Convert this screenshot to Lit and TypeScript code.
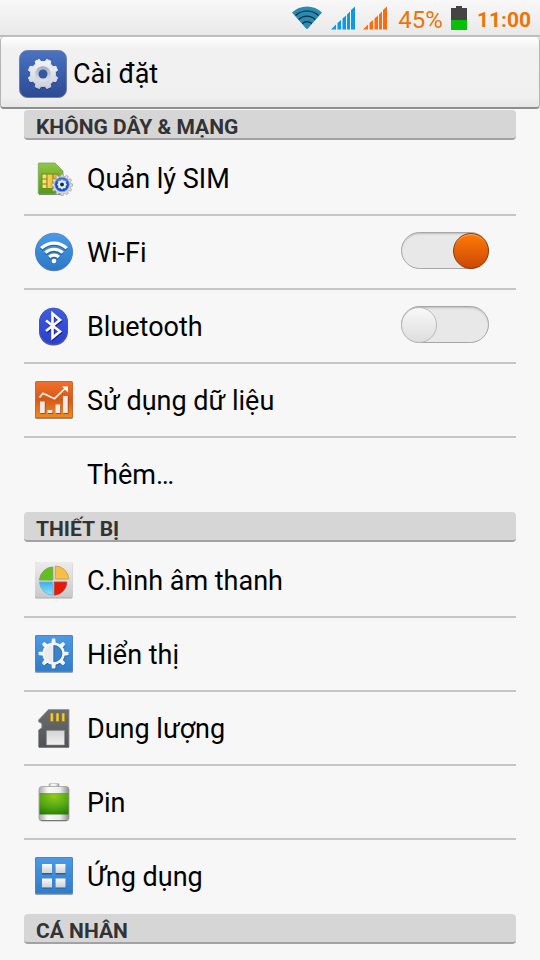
import { LitElement, html, css, svg, nothing, TemplateResult } from "lit";
import { customElement, property } from "lit/decorators.js";

/** Outline of a toothed wheel centred on cx, cy. */
function gear(cx: number, cy: number, teeth: number, inner: number, outer: number, base = 0.3, tip = 0.2, turn = 0): string {
  const step = (Math.PI * 2) / teeth;
  const at = (r: number, a: number) => `${(cx + r * Math.cos(a)).toFixed(2)} ${(cy + r * Math.sin(a)).toFixed(2)}`;
  let d = "";
  for (let i = 0; i < teeth; i++) {
    const a = i * step + turn;
    d += `${i ? "L" : "M"}${at(inner, a - step * base)}L${at(outer, a - step * tip)}L${at(outer, a + step * tip)}L${at(inner, a + step * base)}`;
    d += `A${inner} ${inner} 0 0 1 ${at(inner, a + step * (1 - base))}`;
  }
  return d + "Z";
}

const blueTile = svg`
  <linearGradient id="tile" x2="0" y2="1"><stop offset="0" stop-color="#4c9ae6"/><stop offset="1" stop-color="#2f7cc9"/></linearGradient>
  <rect x="1" y="1" width="38" height="38" rx="1.5" fill="#9aa3ab"/>
  <rect x="1.5" y="1.5" width="37" height="36" rx="1" fill="url(#tile)" stroke="#4a86c0"/>`;

const icons: Record<string, TemplateResult> = {
  sim: svg`
    <linearGradient id="card" x2="0" y2="1"><stop offset="0" stop-color="#93c548"/><stop offset="1" stop-color="#4f9a1c"/></linearGradient>
    <linearGradient id="chip" x2="1" y2="0"><stop offset="0" stop-color="#ffe680"/><stop offset="1" stop-color="#f0a818"/></linearGradient>
    <path d="M5 5h16l8 8v23H5q-.7 0-.7-.7V5.700q0-.7.7-.7z" fill="url(#card)" stroke="#7aa850" stroke-width=".8"/>
    <path d="M5 36.500h24" stroke="#7d8f6c" stroke-width="1"/>
    <rect x="7.500" y="15.500" width="17" height="15.500" rx="1" fill="#6f8a12"/>
    <path d="M8.500 16.500h4v4h-4zM8.500 21.500h4v4h-4zM8.500 26.500h4v3.500h-4zM13.500 16.500h5V30h-5zM19.500 16.500h4v4h-4zM19.500 21.500h4v4h-4zM19.500 26.500h4v3.500h-4z" fill="url(#chip)"/>
    <path d=${gear(28, 27, 12, 8.800, 10.600)} fill="#d9dbe0" stroke="#9a9da5" stroke-width=".7"/>
    <circle cx="28" cy="26.500" r="7.300" fill="#1d50c0" stroke="#8ea6dc" stroke-width=".8"/>
    <path d="M22.300 24a6.200 6.200 0 0 1 11.400 0q-5.700 2-11.400 0z" fill="#4f80e6"/>
    <circle cx="28" cy="26.500" r="4" fill="#e9eefb"/>
    <path d=${gear(28, 26.500, 8, 3.400, 4.800)} fill="#e9eefb"/>
    <circle cx="28" cy="26.500" r="2" fill="#16322f"/>`,
  wifi: svg`
    <linearGradient id="wf" x2="0" y2="1"><stop offset="0" stop-color="#4a9ae6"/><stop offset="1" stop-color="#2c78c6"/></linearGradient>
    <circle cx="20" cy="20.600" r="18.700" fill="#8d9299"/>
    <circle cx="20" cy="19.800" r="18.600" fill="url(#wf)" stroke="#3b7cc0" stroke-width=".7"/>
    <g fill="none" stroke="#1d4f88" stroke-opacity=".6" stroke-width="3.200" transform="translate(0 1.200)"><path d="M7.200 16.400a18.500 18.500 0 0 1 25.600 0M11.300 20.900a12.700 12.700 0 0 1 17.400 0M15.200 25.200a7 7 0 0 1 9.600 0"/></g>
    <g fill="none" stroke="#fff" stroke-width="3.200"><path d="M7.200 16.200a18.500 18.500 0 0 1 25.600 0M11.300 20.700a12.700 12.700 0 0 1 17.400 0M15.200 25a7 7 0 0 1 9.600 0"/></g>
    <circle cx="20" cy="29" r="2.300" fill="#fff"/>`,
  bluetooth: svg`
    <linearGradient id="bt" x2="0" y2="1"><stop offset="0" stop-color="#3f5ce0"/><stop offset="1" stop-color="#2a3fd0"/></linearGradient>
    <rect x="5" y="2.500" width="29" height="37" rx="14" fill="#5b5f80"/>
    <rect x="5.500" y="2" width="28" height="36.300" rx="13.800" fill="url(#bt)" stroke="#4458b0" stroke-width=".7"/>
    <path d="M12 14.500 26 25.500 18.500 31.800V7.500L26 14 12 25" fill="none" stroke="#17238c" stroke-width="2.600" transform="translate(.6 1.200)"/>
    <path d="M12 14.500 26 25.500 18.500 31.800V7.500L26 14 12 25" fill="none" stroke="#fff" stroke-width="2.600"/>`,
  data: svg`
    <linearGradient id="dt" x2="0" y2="1"><stop offset="0" stop-color="#f0702c"/><stop offset=".5" stop-color="#d45a18"/><stop offset="1" stop-color="#f58a1c"/></linearGradient>
    <rect x="1" y="1.500" width="38" height="37.500" rx="1.500" fill="#a08c80"/>
    <rect x="1.500" y="1.500" width="37" height="36" rx="1" fill="url(#dt)" stroke="#d0662c"/>
    <path d="M5.500 17.500 9 13.200l11.500 5.500L31.500 8" fill="none" stroke="#f6efe9" stroke-width="1.700"/>
    <path d="M28 6.500h6v6z" fill="#fff"/>
    <path d="M6 21.500h4.800v11.500H6zM13.500 30h5v3h-5zM21.500 24.500h4.800V33h-4.800zM29 16h4.800v17H29z" fill="#8c3c0c" transform="translate(.6 .8)"/>
    <path d="M6 21.500h4.800v11.500H6zM13.500 30h5v3h-5zM21.500 24.500h4.800V33h-4.800zM29 16h4.800v17H29z" fill="#f0ebe8"/>`,
  sound: svg`
    <linearGradient id="sd" x2="0" y2="1"><stop offset="0" stop-color="#ececec"/><stop offset="1" stop-color="#c9c9c9"/></linearGradient>
    <linearGradient id="cy" x2="0" y2="1"><stop offset="0" stop-color="#35b3e8"/><stop offset="1" stop-color="#9be0f8"/></linearGradient>
    <rect x="1" y="2" width="37.500" height="36.500" rx="1.500" fill="#aaa"/>
    <rect x="1" y="2" width="37.500" height="35.500" rx="1.500" fill="url(#sd)"/>
    <path d="M18.800 20H5.500A14 14 0 0 1 18.800 7z" fill="#5cc31b" stroke="#8a9a5a" stroke-width="1"/>
    <path d="M21.300 19V6a13.600 13.600 0 0 1 13.400 13z" fill="#f8bf45" stroke="#c8a25e" stroke-width="1"/>
    <path d="M5.500 22h13.300v13.200A14 14 0 0 1 5.500 22z" fill="url(#cy)" stroke="#58b8dc" stroke-width=".8"/>
    <path d="M20.300 22h12.500a13.400 13.400 0 0 1-12.500 13.200z" fill="#e5190c" stroke="#c83a2c" stroke-width=".8"/>`,
  display: svg`${blueTile}
    <g fill="#1c5490" fill-opacity=".6" stroke="#1c5490" stroke-opacity=".5" stroke-width="1.500" stroke-linejoin="round"><path d=${gear(20.300, 20.600, 8, 10.500, 14, 0.17, 0.09)}/></g>
    <path d=${gear(19.600, 19.600, 8, 10.500, 14.300, 0.18, 0.09)} fill="#f3f4f5" stroke="#f3f4f5" stroke-width="1.500" stroke-linejoin="round"/>
    <path d="M19.800 11.500a8.100 8.100 0 0 1 0 16.200z" fill="#3a82cc" stroke="#24609e" stroke-width=".8"/>
    <path d="M18.300 11.500a8.100 8.100 0 0 0 0 16.200z" fill="#e9ebed"/>`,
  storage: svg`
    <linearGradient id="st" x2="0" y2="1"><stop offset="0" stop-color="#6c6e70"/><stop offset="1" stop-color="#505254"/></linearGradient>
    <linearGradient id="lb" x2="0" y2="1"><stop offset="0" stop-color="#d4d4d6"/><stop offset="1" stop-color="#f1f1f1"/></linearGradient>
    <path d="M14.500 1.500H35v37.500H4.500V22l3.300-2.300v-4l-3.300-2V12z" fill="url(#st)" stroke="#939597" stroke-width=".9"/>
    <path d="M16.300 5h3v8.500h-3zM22 5h3v8.500h-3zM27.800 5h3v8.500h-3z" fill="#f5cf2c" stroke="#8a7420" stroke-width=".6"/>
    <path d="M12.500 22.500h18v14.500h-18z" fill="url(#lb)" stroke="#8f9193" stroke-width=".6"/>
    <path d="M5 39h30" stroke="#38393a"/>`,
  battery: svg`
    <linearGradient id="ba" x2="1" y2="0"><stop offset="0" stop-color="#a8a8a8"/><stop offset=".3" stop-color="#fafafa"/><stop offset=".7" stop-color="#ececec"/><stop offset="1" stop-color="#8c8c8c"/></linearGradient>
    <radialGradient id="gr" cx=".5" cy=".15" r=".9"><stop offset="0" stop-color="#93cb1c"/><stop offset=".6" stop-color="#4fa512"/><stop offset="1" stop-color="#288008"/></radialGradient>
    <rect x="15" y="1.500" width="10" height="5" rx="1" fill="url(#ba)" stroke="#b0b0b0" stroke-width=".6"/>
    <rect x="5" y="4.500" width="30" height="34.500" rx="3" fill="url(#ba)" stroke="#a0a0a0" stroke-width=".8"/>
    <path d="M5.500 11h29v21.500h-29z" fill="url(#gr)"/>
    <path d="M7 38.500h26" stroke="#777"/>`,
  apps: svg`${blueTile}
    <linearGradient id="sq" x2="0" y2="1"><stop offset="0" stop-color="#fafafa"/><stop offset="1" stop-color="#cfd0d2"/></linearGradient>
    <path d="M8 9.500h10v9H8zM21.500 9.500h10v9h-10zM8 23.500h10v9H8zM21.500 23.500h10v9h-10z" fill="#2a5f96"/>
    <g fill="url(#sq)"><path d="M8 8h10v9H8zM21.500 8h10v9h-10z"/><path d="M8 22.500h10v9H8zM21.500 22.500h10v9h-10z"/></g>`,
};

interface Item {
  label: string;
  icon?: string;
  on?: boolean;
}

interface Section {
  title: string;
  items: Item[];
}

const sections: Section[] = [
  {
    title: "KHÔNG DÂY & MẠNG",
    items: [
      { label: "Quản lý SIM", icon: "sim" },
      { label: "Wi-Fi", icon: "wifi", on: true },
      { label: "Bluetooth", icon: "bluetooth", on: false },
      { label: "Sử dụng dữ liệu", icon: "data" },
      { label: "Thêm…" },
    ],
  },
  {
    title: "THIẾT BỊ",
    items: [
      { label: "C.hình âm thanh", icon: "sound" },
      { label: "Hiển thị", icon: "display" },
      { label: "Dung lượng", icon: "storage" },
      { label: "Pin", icon: "battery" },
      { label: "Ứng dụng", icon: "apps" },
    ],
  },
  { title: "CÁ NHÂN", items: [] },
];

@customElement("status-bar")
export class StatusBar extends LitElement {
  static styles = css`
    :host {
      display: flex;
      align-items: center;
      justify-content: flex-end;
      height: 35px;
      padding-right: 9px;
      border-bottom: 2px solid #bdbdbd;
      background: linear-gradient(#f8f8f8, #e9e9e9);
      color: #ee7407;
      font-family: Roboto, sans-serif;
    }
    svg {
      display: block;
    }
    .icons {
      display: flex;
      gap: 8px;
      margin-right: 11px;
    }
    .percent {
      font-size: 24px;
      line-height: 36px;
      padding-top: 4px;
      margin-right: 8px;
    }
    .clock {
      font-size: 21px;
      line-height: 36px;
      font-weight: 700;
      padding-top: 4px;
      margin-left: 10px;
    }
  `;

  private bars(color: string) {
    return html`<svg width="24" height="24" viewBox="0 0 24 24" fill=${color} aria-hidden="true">
      <path d="M0 23.500 5 18.500v5zM6.500 17l3.500-3v9.500H6.500zM11.500 12.500l3.500-3v14h-3.500zM16 8.500l3-3v18h-3zM20 4 24 .5v23h-4z" />
    </svg>`;
  }

  render() {
    return html`
      <div class="icons">
        <svg width="32" height="24" viewBox="0 0 32 24" aria-hidden="true">
          <path d="M1 6.500a21.500 21.500 0 0 1 30 0L16.500 23h-1z" fill="#2b8ab2" />
          <g fill="none" stroke="#0e2c3a" stroke-width="1.200">
            <path d="M4.500 9.500a17 17 0 0 1 23 0M7.700 13.500a12 12 0 0 1 16.600 0M11.300 17.500a7 7 0 0 1 9.400 0" />
          </g>
        </svg>
        ${this.bars("#0c9ae3")} ${this.bars("#ff6c0c")}
      </div>
      <span class="percent">45%</span>
      <svg width="16" height="24" viewBox="0 0 16 24" aria-hidden="true">
        <path d="M5 0h6v2h5v12H0V2h5z" fill="#444" />
        <path d="M0 14h16v10H0z" fill="#05c105" />
      </svg>
      <time class="clock">11:00</time>
    `;
  }
}

@customElement("settings-row")
export class SettingsRow extends LitElement {
  @property({ attribute: false }) item!: Item;

  static styles = css`
    :host {
      display: block;
    }
    .row {
      display: flex;
      align-items: center;
      gap: 13px;
      height: 72px;
      padding: 0 27px 0 10px;
      color: #000;
      font-size: 27px;
      line-height: 36px;
      text-decoration: none;
    }
    .icon {
      flex: none;
      width: 40px;
      height: 40px;
    }
    .label {
      flex: 1;
      padding-top: 1px;
    }
    .switch {
      appearance: none;
      flex: none;
      display: flex;
      box-sizing: border-box;
      width: 88px;
      height: 37px;
      margin: 0 0 3px;
      border: 1px solid #a6a6a6;
      border-radius: 19px;
      background: #e8e8e8;
      box-shadow: inset 0 2px 2px -1px #bbb;
    }
    .switch::before {
      content: "";
      box-sizing: border-box;
      width: 36px;
      height: 36px;
      margin: 0 -1px;
      border: 1px solid #b8b8b8;
      border-radius: 50%;
      background: linear-gradient(#f8f8f8, #dedede);
    }
    .switch:checked {
      justify-content: flex-end;
    }
    .switch:checked::before {
      border-color: #8a3a0c;
      background: linear-gradient(#ff7a05, #cc4705);
      box-shadow: inset 0 2px 1px -1px #ffae66;
    }
  `;

  render() {
    const { label, icon, on } = this.item;
    const body = html`
      <svg class="icon" viewBox="0 0 40 40" aria-hidden="true">${icon ? icons[icon] : nothing}</svg>
      <span class="label">${label}</span>
    `;
    return on === undefined
      ? html`<a class="row" href="#">${body}</a>`
      : html`<label class="row">${body}<input class="switch" type="checkbox" role="switch" .checked=${on} /></label>`;
  }
}

@customElement("app-root")
export class AppRoot extends LitElement {
  static styles = css`
    :host {
      display: block;
      min-height: 100vh;
      background: #f7f7f7;
      color: #000;
      font-family: Roboto, sans-serif;
    }
    .header {
      display: flex;
      align-items: center;
      gap: 6px;
      box-sizing: border-box;
      height: 72px;
      padding: 4px 18px 0;
      border: 1px solid #b5b5b5;
      border-top: 0;
      border-bottom: 2px solid #8e8e8e;
      border-radius: 4px;
      background: linear-gradient(#fff, #f1f1f1 12px, #f0f0f0 60px, #e6e6e6);
    }
    .logo {
      display: block;
      width: 48px;
      height: 48px;
    }
    .title {
      margin: 0;
      font-size: 27px;
      font-weight: 400;
      line-height: 36px;
    }
    .list {
      padding: 1px 24px 0;
    }
    .heading {
      box-sizing: border-box;
      height: 30px;
      margin: 0 0 2px;
      padding: 2px 12px 0;
      border-bottom: 2px solid #a2a2a2;
      border-radius: 4px;
      background: #d6d6d6;
      color: #333;
      font-size: 21px;
      font-weight: 700;
      line-height: 30px;
    }
    .items {
      margin: 0;
      padding: 0;
      list-style: none;
    }
    .entry {
      border-bottom: 2px solid #c5c5c5;
    }
    .entry:last-child {
      border-color: transparent;
    }
  `;

  render() {
    return html`
      <status-bar></status-bar>
      <header class="header">
        <svg class="logo" viewBox="0 0 48 48" aria-hidden="true">
          <linearGradient id="bg" x2="0" y2="1"><stop offset="0" stop-color="#4a72c4" /><stop offset="1" stop-color="#2b4a92" /></linearGradient>
          <linearGradient id="wheel" x2="0" y2="1"><stop offset="0" stop-color="#f4f5f8" /><stop offset="1" stop-color="#c8cfde" /></linearGradient>
          <linearGradient id="ring" x2="0" y2="1"><stop offset="0" stop-color="#a3acc0" /><stop offset="1" stop-color="#dfe3eb" /></linearGradient>
          <rect x=".5" y=".5" width="47" height="47" rx="8" fill="url(#bg)" stroke="#6f7f9f" />
          <path d=${gear(24, 25.5, 8, 12.4, 15.3, 0.29, 0.19, Math.PI / 8)} fill="#1d3568" opacity=".5" />
          <path d=${gear(24, 24, 8, 12.4, 15, 0.29, 0.19, Math.PI / 8)} fill="url(#wheel)" stroke="url(#wheel)" stroke-linejoin="round" />
          <circle cx="24" cy="24" r="7.8" fill="url(#ring)" />
          <circle cx="24" cy="24" r="4.500" fill="#34589f" />
        </svg>
        <h1 class="title">Cài đặt</h1>
      </header>
      <main class="list">
        ${sections.map(
          (section) => html`
            <section>
              <h2 class="heading">${section.title}</h2>
              <ul class="items">
                ${section.items.map((item) => html`<li class="entry"><settings-row .item=${item}></settings-row></li>`)}
              </ul>
            </section>
          `,
        )}
      </main>
    `;
  }
}
